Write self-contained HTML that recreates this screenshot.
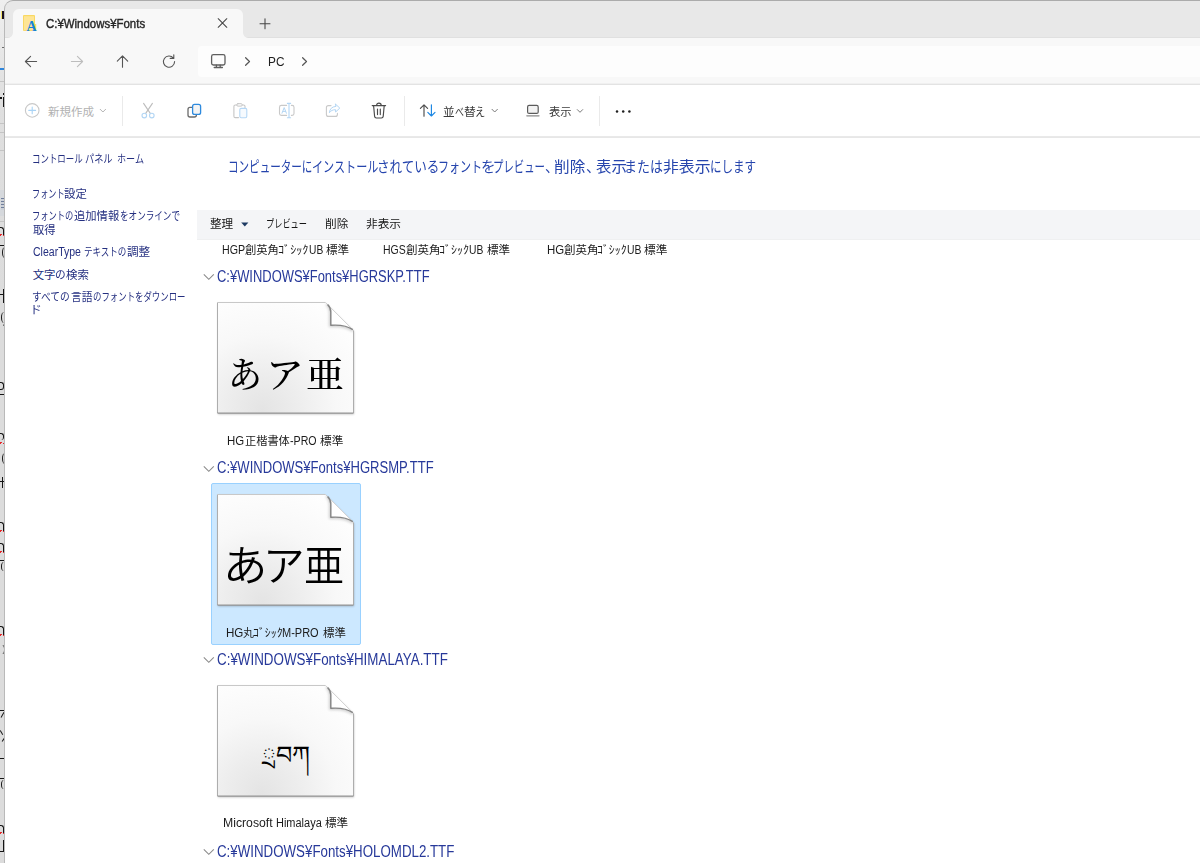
<!DOCTYPE html>
<html lang="ja">
<head>
<meta charset="utf-8">
<title>C:¥Windows¥Fonts</title>
<style>
*{box-sizing:border-box;margin:0;padding:0}
html,body{width:1200px;height:863px;overflow:hidden;background:#fff}
body{position:relative;font-family:"Liberation Sans","Noto Sans CJK JP",sans-serif;font-size:12px;color:#1b1b1b;-webkit-font-smoothing:antialiased}
.abs{position:absolute}
.layer{position:absolute;left:0;top:0;width:1200px;height:863px}
.t{position:absolute;white-space:nowrap;line-height:1}
/* kana runs are condensed the way the Windows UI font draws them */
.k{display:inline-block;white-space:pre;vertical-align:baseline}
.k i{display:inline-block;font-style:normal;transform-origin:0 50%}

/* ---- window behind (thin strip on the left) ---- */
#back{left:0;top:0;width:16px;height:863px;background:linear-gradient(#efefef 0,#e9e9e9 40px,#dfdfdf 100px,#dcdcdc 300px);overflow:hidden}
#back .ln{position:absolute;left:0;width:5px;height:1px;background:#c4c4c4}
#back .st{position:absolute;background:#151515}
#back .ar{position:absolute;left:-2px;width:5.5px;height:9px;border:solid #151515;border-width:1.3px 1.3px 0 0;border-radius:0 3px 0 0}
#back .pa{position:absolute;left:2px;width:6px;height:11px;border-left:1.3px solid #151515;border-radius:60% 0 0 60%}
#back .sq{position:absolute;left:0;width:5px;height:2px;background:repeating-linear-gradient(135deg,#e8262a 0 1.5px,rgba(232,38,42,0) 1.5px 3px)}
#frame{z-index:2;pointer-events:none;left:4px;top:0;width:1210px;height:880px;border-left:1px solid #b9b9b9;border-top:1px solid #ababab;border-top-left-radius:9px}

/* ---- explorer window ---- */
#win{left:5px;top:0;width:1195px;height:863px;background:#fff;border-top-left-radius:8px;overflow:hidden}
#titlebar{left:0;top:0;width:1195px;height:38px;background:#e8e8e8;border-bottom:1px solid #e0e0e0}
#tab{left:8px;top:9px;width:230px;height:29px;background:#f8f8f8;border-radius:6px 6px 0 0}
#tab:before,#tab:after{content:"";position:absolute;bottom:0;width:5px;height:5px}
#tab:before{left:-5px;background:radial-gradient(circle at 0 0,rgba(248,248,248,0) 4.4px,#f8f8f8 5.2px)}
#tab:after{right:-5px;background:radial-gradient(circle at 100% 0,rgba(248,248,248,0) 4.4px,#f8f8f8 5.2px)}
#navbar{left:0;top:38px;width:1195px;height:46px;background:#f8f8f8}
#navline{left:0;top:83px;width:1195px;height:2px;background:linear-gradient(#f0f0f0 0 50%,#e3e3e3 50% 100%)}
#addr{left:193px;top:46px;width:1010px;height:31px;background:#fdfdfd;border-radius:4px}
#cmdbar{left:0;top:85px;width:1195px;height:51px;background:#fff}
#cmdline{left:0;top:136px;width:1195px;height:2px;background:linear-gradient(#e9e9e9 0 50%,#e7e7e7 50% 100%)}
.sep{position:absolute;top:96px;width:1px;height:30px;background:#eaeaea}

/* ---- text styles ---- */
.tt{color:#262626}
.pc{color:#1f1f1f}
.cmd{color:#3a3a3a}
.cmd.dis{color:#b2b2b2}
.side{color:#242f80}
.head{color:#2645ad}
#band{left:197px;top:210px;width:1003px;height:30px;background:#f4f5f7;border-bottom:1px solid #eff0f1}
.bt{color:#151515}
.lbl{color:#1c1c1c}
.grp{color:#27399a}
.chev{position:absolute;left:203px}
.smp{color:#000}
/* ---- font preview tile ---- */
.tile{position:absolute;left:217px;width:137px;height:112px}
.tile svg{position:absolute;left:-4px;top:-4px}
#sel{left:211px;top:483px;width:150px;height:162px;background:#cce8ff;border:1px solid #99d1ff;border-radius:2px}
</style>
</head>
<body>


<!-- shared artwork: the "paper" thumbnail used by every font tile -->
<svg width="0" height="0" style="position:absolute">
  <defs>
    <radialGradient id="pgfill" gradientUnits="userSpaceOnUse" cx="45" cy="108" r="120">
      <stop offset="0" stop-color="#e4e4e4"/><stop offset=".3" stop-color="#ededed"/><stop offset=".62" stop-color="#f8f8f8"/><stop offset="1" stop-color="#fefefe"/>
    </radialGradient>
    <filter id="soft" x="-20%" y="-20%" width="140%" height="140%"><feGaussianBlur stdDeviation="1.1"/></filter>
    <filter id="soft2" x="-50%" y="-50%" width="200%" height="200%"><feGaussianBlur stdDeviation="1.6"/></filter>
    <clipPath id="pgclip"><path d="M.5.5H108.5L136.5 28.5V111H.5z"/></clipPath>
    <g id="paper">
      <path d="M1 1.5H108.5L137 29.5V112.3H1z" fill="#000" opacity=".26" filter="url(#soft)"/>
      <path d="M.5.5H108.5L136.5 28.5V111H.5z" fill="url(#pgfill)"/>
      <g clip-path="url(#pgclip)">
        <path d="M110 1.5C113 4.5 113.8 7 113.8 10V23.3C122 22.7 130 23.6 136.5 28.5" fill="none" stroke="#000" stroke-width="3" opacity=".22" filter="url(#soft2)"/>
      </g>
      <path d="M109.3 1.2C112.6 4.2 113.8 7 113.8 10V23.3C122 22.7 130 23.6 136.3 28.3z" fill="#fff"/>
      <g fill="none">
        <path d="M.5 111V.5" stroke="#adadad"/>
        <path d="M.5.5H108.5" stroke="#c8c8c8"/>
        <path d="M108.5.5L136.5 28.5" stroke="#cfcfcf" stroke-width=".9"/>
        <path d="M136.5 28.5V111" stroke="#adadad"/>
        <path d="M.5 111.1H136.5" stroke="#949494" stroke-width="1.2"/>
        <path d="M110.6 2.6C113 5 113.8 7.5 113.8 10V23.3C122 22.7 130 23.6 135.8 27.7" stroke="#858585" stroke-width="1.45" stroke-linejoin="round"/>
      </g>
    </g>
  </defs>
</svg>

<div id="back" class="abs">
  <!-- sliver of the window behind: only ~4px show, so these are just stroke ends, rule lines and spell-check squiggles -->
  <div class="abs" style="left:1px;top:10.5px;width:4px;height:8.5px;background:#1a1020;border-left:1px solid #f3e36b"></div>
  <div class="ln" style="top:47px;left:1.5px;background:#6a6a6a"></div>
  <div class="abs" style="left:0;top:67.5px;width:5px;height:2.5px;background:#2f86dc"></div>
  <div class="ln" style="top:81px"></div>
  <div class="st" style="left:3.2px;top:96.5px;width:1.6px;height:10px"></div><div class="st" style="left:3.2px;top:92.8px;width:1.6px;height:1.8px"></div><div class="st" style="left:0;top:97px;width:1.5px;height:1.8px"></div>
  <div class="ln" style="top:123px"></div>
  <div class="ln" style="top:132px"></div>
  <div class="ln" style="top:150px"></div>
  <div class="abs" style="left:0;top:190px;width:5px;height:26px;background:#d5d8dc"></div>
  <div class="abs" style="left:.5px;top:197.5px;width:4px;height:12px;background:repeating-linear-gradient(#56678a 0 1.5px,#c9ced6 1.5px 3px);opacity:.8"></div>
  <div class="ln" style="top:221px"></div>
  <div class="ar" style="top:227px"></div><div class="sq" style="top:234px"></div>
  <div class="st" style="left:0;top:245px;width:4.5px;height:1.2px"></div><div class="pa" style="top:247px"></div>
  <div class="st" style="left:2.8px;top:289px;width:1.5px;height:14px"></div><div class="st" style="left:0;top:294px;width:4.5px;height:1.2px"></div>
  <div class="pa" style="top:312px;left:1px"></div><div class="st" style="left:3.5px;top:322px;width:1.2px;height:4px;transform:rotate(25deg)"></div>
  <div class="ar" style="top:382px;height:8px;border-radius:0 3px 3px 0;border-bottom:1.3px solid #111"></div><div class="st" style="left:0;top:393.5px;width:4.5px;height:1px"></div>
  <div class="ar" style="top:433px;height:7px;border-radius:0 3px 3px 0"></div><div class="sq" style="top:442px"></div>
  <div class="pa" style="top:453px"></div>
  <div class="st" style="left:1.5px;top:477px;width:1.5px;height:11px"></div><div class="st" style="left:0;top:480.5px;width:4.5px;height:1.2px"></div>
  <div class="ar" style="top:522px"></div><div class="sq" style="top:530px"></div>
  <div class="ar" style="top:543px"></div><div class="sq" style="top:551px"></div>
  <div class="st" style="left:0;top:560px;width:4.5px;height:1.2px"></div><div class="pa" style="top:562px;left:1px;height:9px"></div>
  <div class="ar" style="top:626px"></div><div class="sq" style="top:634px"></div>
  <div class="pa" style="top:645px;left:-1px;height:9px;border-left:0;border-right:1.3px solid #111;border-radius:0 60% 60% 0"></div>
  <div class="st" style="left:0;top:709.5px;width:4.5px;height:1.2px"></div><div class="st" style="left:2px;top:712px;width:1.3px;height:6px;transform:rotate(30deg)"></div>
  <div class="st" style="left:1px;top:730px;width:1.3px;height:5px;transform:rotate(-30deg)"></div><div class="st" style="left:2.5px;top:737px;width:1.3px;height:5px;transform:rotate(35deg)"></div>
  <div class="st" style="left:0;top:758px;width:4.5px;height:1.3px"></div>
  <div class="st" style="left:0;top:778px;width:4.5px;height:1.2px"></div><div class="pa" style="top:780px;left:1px;height:9px"></div>
  <div class="ar" style="top:825px"></div><div class="sq" style="top:832px"></div>
  <div class="st" style="left:2.5px;top:840px;width:1.5px;height:11px"></div><div class="st" style="left:0;top:851px;width:4px;height:1.2px"></div>
</div>

<div id="frame" class="abs"></div>

<!-- ================= File Explorer window: C:¥Windows¥Fonts ================= -->
<div id="win" class="abs">
  <div id="titlebar" class="abs"></div>
  <div id="tab" class="abs"></div>
  <div id="navbar" class="abs"></div>
  <div id="addr" class="abs"></div>
  <div id="navline" class="abs"></div>
  <div id="cmdbar" class="abs"></div>
  <div id="cmdline" class="abs"></div>
</div>

<!-- ---- tab strip ---- -->
<div id="tabstrip" class="layer">
  <svg class="abs" style="left:20px;top:12px" width="20" height="22" viewBox="20 12 20 22">
    <rect x="23" y="15" width="12" height="16" rx="1" fill="#f9d862"/>
    <rect x="24" y="16.2" width="10" height="14" fill="#fee595"/>
    <rect x="34.6" y="24" width="1.6" height="7" fill="#fbdc6c"/>
  </svg>
  <div class="t" style="left:26.4px;top:19.6px;font-family:'Liberation Serif',serif;font-weight:bold;font-size:14px;color:#1583d8">A</div>
  <div class="t tt" style="left:46.05px;top:18px;font-size:12.8px;-webkit-text-stroke:.4px #262626;"><span class="k"><i style="transform:scaleX(0.8934)">C:¥Windows¥Fonts</i></span></div>
  <svg class="abs" style="left:210px;top:12px" width="70" height="24" viewBox="210 12 70 24" fill="none" stroke="#444" stroke-width="1.05" stroke-linecap="round">
    <path d="M218.2 18.7l8.6 8.6M226.8 18.7l-8.6 8.6"/>
    <path d="M260 23.7h10M265 18.7v10"/>
  </svg>
</div>

<!-- ---- navigation bar: back / forward / up / refresh + address ---- -->
<div id="nav" class="layer">
  <svg class="abs" style="left:0;top:48px" width="320" height="28" viewBox="0 48 320 28" fill="none" stroke-linecap="round" stroke-linejoin="round">
    <g stroke="#555" stroke-width="1.1">
      <path d="M36.6 61.5H25.4M30.6 56.3l-5.2 5.2 5.2 5.2"/>
      <path d="M122.5 67.3V55.9M117.3 61.1l5.2-5.2 5.2 5.2"/>
      <path d="M173.4 58.2A5.6 5.6 0 1 0 174.6 61.6M170.2 58.4h3.6v-3.6"/>
    </g>
    <path d="M71.4 61.5h11.2M77.4 56.3l5.2 5.2-5.2 5.2" stroke="#bdbdbd" stroke-width="1.1"/>
    <g stroke="#5f5f5f" stroke-width="1.3">
      <rect x="211.6" y="54.6" width="13.4" height="10.4" rx="1.8"/>
      <path d="M216.4 65.2v2M220.2 65.2v2M214.2 67.5h8.2"/>
    </g>
    <g stroke="#555" stroke-width="1.2">
      <path d="M245.6 57.7l3.9 3.8-3.9 3.8"/>
      <path d="M302.6 57.7l3.9 3.8-3.9 3.8"/>
    </g>
  </svg>
  <div class="t pc" style="left:267.59px;top:55px;font-size:13px;"><span class="k"><i style="transform:scaleX(0.9091)">PC</i></span></div>
</div>

<!-- ---- command bar ---- -->
<div id="commands" class="layer">
  <div class="sep" style="left:122px"></div>
  <div class="sep" style="left:404px"></div>
  <div class="sep" style="left:599px"></div>
  <svg class="abs" style="left:0;top:90px" width="700" height="40" viewBox="0 90 700 40" fill="none" stroke-linecap="round" stroke-linejoin="round">
    <!-- new (disabled) -->
    <circle cx="32.2" cy="110.4" r="6.8" stroke="#c9c9c9" stroke-width="1.1"/>
    <path d="M28.8 110.4h6.8M32.2 107v6.8" stroke="#a9d3f5" stroke-width="1.1"/>
    <path d="M100.2 109.3l2.7 2.7 2.7-2.7" stroke="#b4b4b4"/>
    <!-- cut (disabled) -->
    <path d="M143.6 103.4l6.7 10M152.4 103.4l-6.7 10" stroke="#bdbdbd" stroke-width="1.1"/>
    <circle cx="144.3" cy="115.6" r="2.3" stroke="#b3d6f4" stroke-width="1.1"/>
    <circle cx="151.8" cy="115.6" r="2.3" stroke="#b3d6f4" stroke-width="1.1"/>
    <!-- copy -->
    <rect x="188" y="107.4" width="8.4" height="9.6" rx="2" stroke="#6b6b6b" stroke-width="1.3"/>
    <rect x="192.6" y="104.4" width="8" height="10" rx="2" fill="#f4f4f4" stroke="#2e8ade" stroke-width="1.3"/>
    <!-- paste (disabled) -->
    <path d="M236.5 105h-1.2a1.4 1.4 0 0 0-1.4 1.4v9.8a1.4 1.4 0 0 0 1.4 1.4h3.2M242.4 105h1.2a1.4 1.4 0 0 1 1.4 1.4v1.2" stroke="#c6c6c6" stroke-width="1.1"/>
    <rect x="236.8" y="103.7" width="5.4" height="2.4" rx="1.1" stroke="#c6c6c6"/>
    <rect x="239.8" y="108.4" width="7" height="9.3" rx="1.4" fill="#f6fafe" stroke="#b5d7f5" stroke-width="1.1"/>
    <!-- rename (disabled) -->
    <path d="M286.6 105.4h-5.2a1.9 1.9 0 0 0-1.9 1.9v6.2a1.9 1.9 0 0 0 1.9 1.9h5.2M291.4 105.4h.7a1.9 1.9 0 0 1 1.9 1.9v6.2a1.9 1.9 0 0 1-1.9 1.9h-.7" stroke="#c9c9c9" stroke-width="1.1"/>
    <path d="M289 103.6v14M287.4 103.4h3.2M287.4 117.8h3.2" stroke="#b3d6f4" stroke-width="1.1"/>
    <path d="M282 113.2l2.2-5.6 2.2 5.6M282.8 111.4h2.8" stroke="#b3d6f4"/>
    <!-- share (disabled) -->
    <path d="M331 105.6h-2.6a2 2 0 0 0-2 2v6.8a2 2 0 0 0 2 2h7a2 2 0 0 0 2-2v-1" stroke="#c9c9c9" stroke-width="1.1"/>
    <path d="M335.6 104.2l4.2 3.9-4.2 3.9v-2.3c-3 0-4.8 1-6.2 3 .3-3.6 2.4-6 6.2-6.3z" stroke="#b3d6f4"/>
    <!-- delete -->
    <g stroke="#4a4a4a" stroke-width="1.15">
      <path d="M372.2 105.6h13.4M376.6 105.4a2.3 2.3 0 0 1 4.6 0"/>
      <path d="M373.6 105.8l1 10.6a1.8 1.8 0 0 0 1.8 1.6h5a1.8 1.8 0 0 0 1.8-1.6l1-10.6"/>
      <path d="M377.5 109v5.6M380.3 109v5.6"/>
    </g>
    <!-- sort -->
    <path d="M424 116.2v-11M420.4 108.4l3.6-3.6 3.6 3.6" stroke="#4d4d4d" stroke-width="1.15"/>
    <path d="M431.4 104.8v11M427.8 112.4l3.6 3.6 3.6-3.6" stroke="#1a86e3" stroke-width="1.15"/>
    <path d="M492 109.3l2.7 2.7 2.7-2.7" stroke="#7a7a7a"/>
    <!-- view -->
    <rect x="527.6" y="105.4" width="10.6" height="8" rx="1.5" fill="#f3f3f3" stroke="#5b5b5b" stroke-width="1.2"/>
    <path d="M526.8 115.8h12.2" stroke="#8a8a8a" stroke-width="1.3"/>
    <path d="M577.3 109.6l2.7 2.7 2.7-2.7" stroke="#7a7a7a"/>
    <!-- more -->
    <g fill="#1f1f1f" stroke="none">
      <circle cx="617" cy="111.4" r="1.25"/><circle cx="623.2" cy="111.4" r="1.25"/><circle cx="629.4" cy="111.4" r="1.25"/>
    </g>
  </svg>
  <div class="t cmd dis" style="left:48px;top:106px;font-size:12px;"><span class="k"><i style="font-size:11.5px;transform:scaleX(1)">新規作成</i></span></div>
  <div class="t cmd" style="left:443.3px;top:106px;font-size:12px;"><span class="k" style="width:11.91px"><i style="font-size:11.5px;transform:scaleX(1.0095)">並</i></span><span class="k" style="width:8.88px"><i style="font-size:11.5px;transform:scaleX(0.7805)">べ</i></span><span class="k" style="width:10.98px"><i style="font-size:11.5px;transform:scaleX(1.0286)">替</i></span><span class="k"><i style="font-size:11.5px;transform:scaleX(0.8889)">え</i></span></div>
  <div class="t cmd" style="left:548.56px;top:106px;font-size:12px;"><span class="k"><i style="font-size:11.5px;transform:scaleX(0.9798)">表示</i></span></div>
</div>

<!-- ---- left task pane ---- -->
<div id="taskpane" class="layer">
  <div class="t side" style="left:32px;top:153px;font-size:12px;"><span class="k" style="width:53.39px"><i style="font-size:11.4px;transform:scaleX(0.7409)">コントロール </i></span><span class="k" style="width:31.81px"><i style="font-size:11.4px;transform:scaleX(0.803)">パネル </i></span><span class="k"><i style="font-size:11.4px;transform:scaleX(0.7969)">ホーム</i></span></div>
  <div class="t side" style="left:32.23px;top:188px;font-size:12px;"><span class="k" style="width:32.27px"><i style="font-size:11.4px;transform:scaleX(0.7148)">フォント</i></span><span class="k"><i style="font-size:11.4px;transform:scaleX(1.0023)">設定</i></span></div>
  <div class="t side" style="left:32.21px;top:210px;font-size:12px;"><span class="k" style="width:41.99px"><i style="font-size:11.4px;transform:scaleX(0.7266)">フォントの</i></span><span class="k" style="width:45.44px"><i style="font-size:11.4px;transform:scaleX(0.9922)">追加情報</i></span><span class="k"><i style="font-size:11.4px;transform:scaleX(0.7526)">をオンラインで</i></span></div>
  <div class="t side" style="left:33.05px;top:224px;font-size:12px;"><span class="k"><i style="font-size:11.4px;transform:scaleX(0.9909)">取得</i></span></div>
  <div class="t side" style="left:32.86px;top:246px;font-size:12px;"><span class="k" style="width:51.09px"><i style="transform:scaleX(0.8763)">ClearType </i></span><span class="k" style="width:42.84px"><i style="font-size:11.4px;transform:scaleX(0.7489)">テキストの</i></span><span class="k"><i style="font-size:11.4px;transform:scaleX(1.0182)">調整</i></span></div>
  <div class="t side" style="left:32.7px;top:269px;font-size:12px;"><span class="k" style="width:22.36px"><i style="font-size:11.4px;transform:scaleX(1)">文字</i></span><span class="k" style="width:10.73px"><i style="font-size:11.4px;transform:scaleX(0.9368)">の</i></span><span class="k"><i style="font-size:11.4px;transform:scaleX(1.0093)">検索</i></span></div>
  <div class="t side" style="left:32.45px;top:291px;font-size:12px;"><span class="k" style="width:38.68px"><i style="font-size:11.4px;transform:scaleX(0.8521)">すべての</i></span><span class="k" style="width:21.83px"><i style="font-size:11.4px;transform:scaleX(0.9455)">言語</i></span><span class="k"><i style="font-size:11.4px;transform:scaleX(0.7383)">のフォントをダウンロー</i></span></div>
  <div class="t side" style="left:30.09px;top:304px;font-size:12px;"><span class="k"><i style="font-size:11.4px;transform:scaleX(1.0308)">ド</i></span></div>
</div>

<!-- ---- fonts list ---- -->
<div id="fonts" class="layer">
  <div class="t head" style="left:228.42px;top:159px;font-size:15px;"><span class="k" style="width:83.66px"><i style="transform:scaleX(0.7028)">コンピューターに</i></span><span class="k" style="width:65.24px"><i style="transform:scaleX(0.7407)">インストール</i></span><span class="k" style="width:61.03px"><i style="transform:scaleX(0.837)">されている</i></span><span class="k" style="width:42.21px"><i style="transform:scaleX(0.7351)">フォント</i></span><span class="k" style="width:12.76px"><i style="transform:scaleX(0.9617)">を</i></span><span class="k" style="width:51.8px"><i style="transform:scaleX(0.6923)">プレビュー</i></span><span class="k" style="width:9.15px"><i style="transform:scaleX(0.9176)">、</i></span><span class="k" style="width:31.72px"><i style="transform:scaleX(1.0421)">削除</i></span><span class="k" style="width:9.81px"><i style="transform:scaleX(0.9647)">、</i></span><span class="k" style="width:28.54px"><i style="transform:scaleX(1.0261)">表示</i></span><span class="k" style="width:38.84px"><i style="transform:scaleX(0.8627)">または</i></span><span class="k" style="width:46.78px"><i style="transform:scaleX(1.0583)">非表示</i></span><span class="k"><i style="transform:scaleX(0.7686)">にします</i></span></div>

  <!-- organise toolbar -->
  <div id="band" class="abs"></div>
  <div class="t bt" style="left:210.39px;top:218px;font-size:12px;"><span class="k"><i style="font-size:11.4px;transform:scaleX(1.0182)">整理</i></span></div>
  <svg class="abs" style="left:240px;top:221px" width="10" height="7" viewBox="0 0 10 7"><path d="M1.2 1.4h7.2l-3.6 4.2z" fill="#1d3a63"/></svg>
  <div class="t bt" style="left:266.32px;top:218px;font-size:12px;"><span class="k"><i style="font-size:11.4px;transform:scaleX(0.7189)">プレビュー</i></span></div>
  <div class="t bt" style="left:324.93px;top:218px;font-size:12px;"><span class="k"><i style="font-size:11.4px;transform:scaleX(1.0207)">削除</i></span></div>
  <div class="t bt" style="left:366.09px;top:218px;font-size:12px;"><span class="k"><i style="font-size:11.4px;transform:scaleX(1.0242)">非表示</i></span></div>

  <!-- tail of the previous group: labels only, thumbnails are scrolled out of view -->
  <div class="t lbl" style="left:221.91px;top:244px;font-size:12px;"><span class="k" style="width:23.49px"><i style="transform:scaleX(0.8898)">HGP</i></span><span class="k" style="width:32.9px"><i style="font-size:11.4px;transform:scaleX(0.9922)">創英角</i></span><span class="k" style="width:30.25px"><i style="font-size:11.4px;transform:scaleX(1.0679)">ｺﾞｼｯｸ</i></span><span class="k" style="width:17.35px"><i style="transform:scaleX(0.8533)">UB </i></span><span class="k"><i style="font-size:11.4px;transform:scaleX(1.0115)">標準</i></span></div>
  <div class="t lbl" style="left:383.33px;top:244px;font-size:12px;"><span class="k" style="width:22.87px"><i style="transform:scaleX(0.8735)">HGS</i></span><span class="k" style="width:33.31px"><i style="font-size:11.4px;transform:scaleX(1.0078)">創英角</i></span><span class="k" style="width:29.83px"><i style="font-size:11.4px;transform:scaleX(1.0532)">ｺﾞｼｯｸ</i></span><span class="k" style="width:17.65px"><i style="transform:scaleX(0.86)">UB </i></span><span class="k"><i style="font-size:11.4px;transform:scaleX(1.0115)">標準</i></span></div>
  <div class="t lbl" style="left:546.75px;top:244px;font-size:12px;"><span class="k" style="width:17.05px"><i style="transform:scaleX(0.9538)">HG</i></span><span class="k" style="width:33.42px"><i style="font-size:11.4px;transform:scaleX(1.0078)">創英角</i></span><span class="k" style="width:29.41px"><i style="font-size:11.4px;transform:scaleX(1.0385)">ｺﾞｼｯｸ</i></span><span class="k" style="width:17.15px"><i style="transform:scaleX(0.8667)">UB </i></span><span class="k"><i style="font-size:11.4px;transform:scaleX(1.0253)">標準</i></span></div>

  <!-- group: HGRSKP.TTF -->
  <svg class="chev" style="top:273px" width="12" height="8" viewBox="0 0 12 8"><path d="M.8 1.3l5 5 5-5" fill="none" stroke="#8a8a8a" stroke-width="1.1"/></svg>
  <div class="t grp" style="left:217.38px;top:269px;font-size:15.6px;"><span class="k"><i style="transform:scaleX(0.8298)">C:¥WINDOWS¥Fonts¥HGRSKP.TTF</i></span></div>
  <div class="tile" style="top:302px"><svg width="146" height="121" viewBox="-4 -4 146 121"><use href="#paper"/></svg></div>
  <div class="t smp" lang="ja" style="left:228.42px;top:354px;font-size:36.5px;font-family:'Noto Serif CJK SC',serif;font-weight:500;"><span class="k" style="width:37.2px"><i style="transform:scaleX(0.9298)">あ</i></span><span class="k" style="width:40.33px"><i style="transform:scaleX(1.0364)">ア</i></span><span class="k"><i style="transform:scaleX(1.037)">亜</i></span></div>
  <div class="t lbl" style="left:227.45px;top:435px;font-size:12px;"><span class="k" style="width:17.16px"><i style="transform:scaleX(0.9538)">HG</i></span><span class="k" style="width:45.55px"><i style="font-size:11.4px;transform:scaleX(0.9832)">正楷書体</i></span><span class="k" style="width:29.93px"><i style="transform:scaleX(0.8862)">-PRO </i></span><span class="k"><i style="font-size:11.4px;transform:scaleX(1.0207)">標準</i></span></div>

  <!-- group: HGRSMP.TTF (selected item) -->
  <svg class="chev" style="top:465px" width="12" height="8" viewBox="0 0 12 8"><path d="M.8 1.3l5 5 5-5" fill="none" stroke="#8a8a8a" stroke-width="1.1"/></svg>
  <div class="t grp" style="left:217.37px;top:460px;font-size:15.6px;"><span class="k"><i style="transform:scaleX(0.8373)">C:¥WINDOWS¥Fonts¥HGRSMP.TTF</i></span></div>
  <div id="sel" class="abs"></div>
  <div class="tile" style="top:494px"><svg width="146" height="121" viewBox="-4 -4 146 121"><use href="#paper"/></svg></div>
  <div class="t smp" lang="ja" style="left:222.94px;top:542px;font-size:42.5px;font-family:'Noto Sans CJK JP',sans-serif;font-weight:350;"><span class="k" style="width:40.32px"><i style="transform:scaleX(1.0448)">あ</i></span><span class="k" style="width:41.15px"><i style="transform:scaleX(0.9794)">ア</i></span><span class="k"><i style="transform:scaleX(0.9455)">亜</i></span></div>
  <div class="t lbl" style="left:225.73px;top:627px;font-size:12px;"><span class="k" style="width:16.99px"><i style="transform:scaleX(0.9662)">HG</i></span><span class="k" style="width:10.6px"><i style="font-size:11.4px;transform:scaleX(0.9581)">丸</i></span><span class="k" style="width:29.06px"><i style="font-size:11.4px;transform:scaleX(1.0385)">ｺﾞｼｯｸ</i></span><span class="k" style="width:40.42px"><i style="transform:scaleX(0.9169)">M-PRO </i></span><span class="k"><i style="font-size:11.4px;transform:scaleX(1.0023)">標準</i></span></div>

  <!-- group: HIMALAYA.TTF -->
  <svg class="chev" style="top:656px" width="12" height="8" viewBox="0 0 12 8"><path d="M.8 1.3l5 5 5-5" fill="none" stroke="#8a8a8a" stroke-width="1.1"/></svg>
  <div class="t grp" style="left:217.16px;top:652px;font-size:15.6px;"><span class="k"><i style="transform:scaleX(0.8587)">C:¥WINDOWS¥Fonts¥HIMALAYA.TTF</i></span></div>
  <div class="tile" style="top:685px"><svg width="146" height="121" viewBox="-4 -4 146 121"><use href="#paper"/></svg></div>
  <div class="t smp" lang="bo" style="left:262px;top:743px;font-size:25.5px;font-family:'DejaVu Serif','Liberation Serif',serif;">ྲབཀ</div>
  <div class="t lbl" style="left:222.78px;top:817px;font-size:12px;"><span class="k" style="width:52.9px"><i style="transform:scaleX(1.0189)">Microsoft </i></span><span class="k" style="width:49.11px"><i style="transform:scaleX(0.9143)">Himalaya </i></span><span class="k"><i style="font-size:11.4px;transform:scaleX(1.0161)">標準</i></span></div>

  <!-- group: HOLOMDL2.TTF -->
  <svg class="chev" style="top:848px" width="12" height="8" viewBox="0 0 12 8"><path d="M.8 1.3l5 5 5-5" fill="none" stroke="#8a8a8a" stroke-width="1.1"/></svg>
  <div class="t grp" style="left:217.16px;top:844px;font-size:15.6px;"><span class="k"><i style="transform:scaleX(0.8535)">C:¥WINDOWS¥Fonts¥HOLOMDL2.TTF</i></span></div>
</div>

</body>
</html>
